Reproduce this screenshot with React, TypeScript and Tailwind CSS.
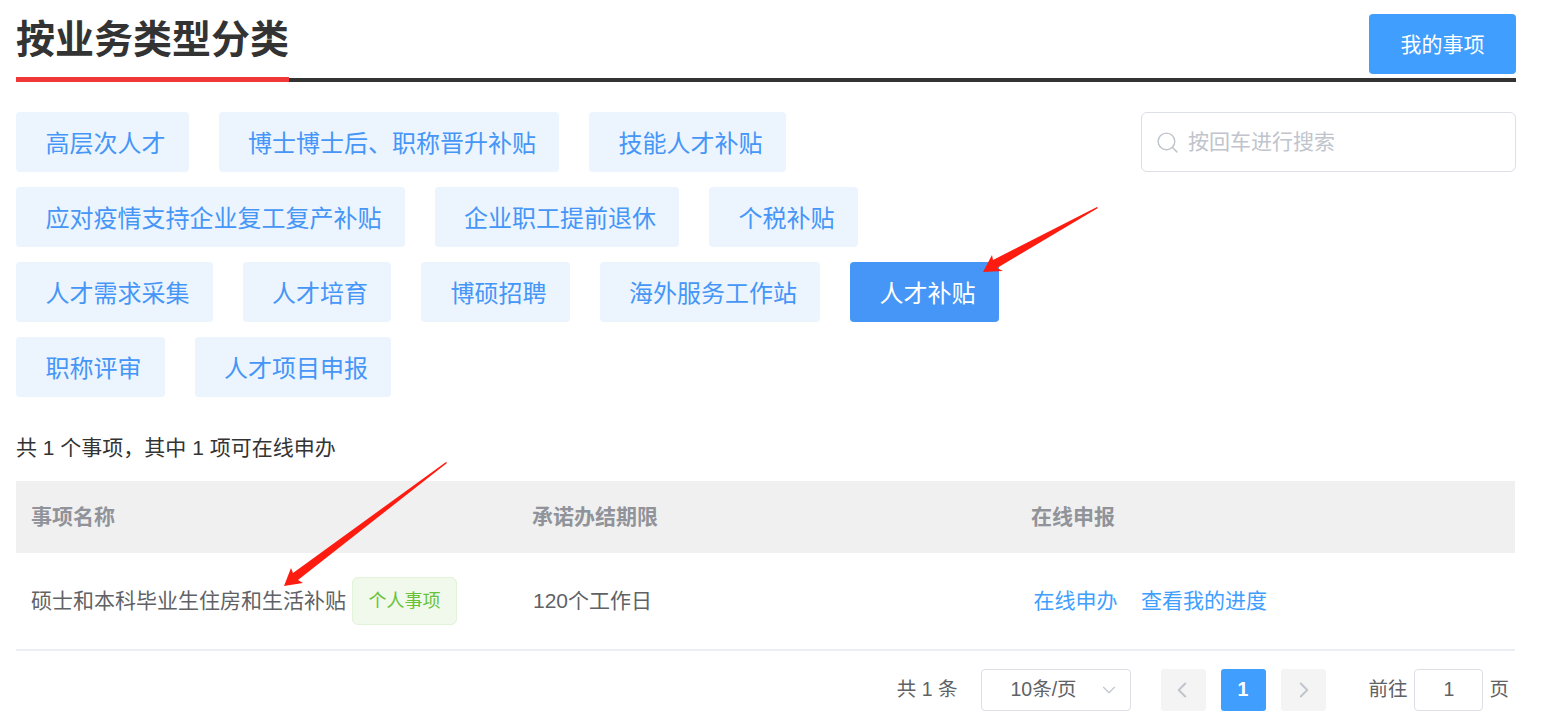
import React from 'react';
import { Search, ChevronDown, ChevronLeft, ChevronRight } from 'lucide-react';

const FONT = '"Liberation Sans", "Noto Sans CJK SC", sans-serif';

const categories = [
  '高层次人才',
  '博士博士后、职称晋升补贴',
  '技能人才补贴',
  '应对疫情支持企业复工复产补贴',
  '企业职工提前退休',
  '个税补贴',
  '人才需求采集',
  '人才培育',
  '博硕招聘',
  '海外服务工作站',
  '人才补贴',
  '职称评审',
  '人才项目申报',
];

const Arrow: React.FC<{ className: string; points: string; width: number; height: number }> = ({ className, points, width, height }) => (
  <svg className={className} width={width} height={height} viewBox={`0 0 ${width} ${height}`}>
    <polygon points={points} fill="#fe1c11" />
  </svg>
);

const App: React.FC = () => {
  return (
    <div className="relative w-[1542px] h-[727px] overflow-hidden bg-white pl-4 pr-[26px]" style={{ fontFamily: FONT }}>
      {/* title */}
      <div className="relative h-[82px] border-b-[4px] border-[#333333] flex justify-between">
        <h1 className="text-[39px] leading-[52px] mt-[14px] font-bold text-[#333333]">按业务类型分类</h1>
        <button className="w-[147px] h-[60px] mt-[14px] pt-[2px] rounded-[4px] bg-[#409eff] text-white text-[21px]">我的事项</button>
        <span className="absolute left-0 bottom-[-4px] w-[273px] h-[5px] bg-[#f03838]"></span>
      </div>

      {/* categories + search */}
      <div className="flex justify-between mt-[30px]">
        <div className="w-[1050px] flex flex-wrap gap-x-[30px] gap-y-[15px]">
          {categories.map((name) => (
            <div
              key={name}
              className={
                name === '人才补贴'
                  ? 'h-[60px] pl-[29.5px] pr-[23px] pt-[3px] flex items-center rounded-[4px] text-[24px] bg-[#4596f7] text-white'
                  : 'h-[60px] pl-[29.5px] pr-[23px] pt-[3px] flex items-center rounded-[4px] text-[24px] bg-[#ecf4fe] text-[#4596f7]'
              }
            >
              {name}
            </div>
          ))}
        </div>
        <div className="w-[375px] h-[60px] border border-[#dcdfe6] rounded-[6px] flex items-center pl-[13px] gap-[8px] text-[#c0c4cc]">
          <Search size={25} strokeWidth={1.4} />
          <span className="text-[21px]">按回车进行搜索</span>
        </div>
      </div>

      <p className="mt-[36px] text-[21px] leading-[30px] text-[#333333]">共 1 个事项，其中 1 项可在线申办</p>

      {/* table */}
      <div className="mt-[18px] w-[1499px]">
        <div className="h-[72px] bg-[#f0f0f0] grid grid-cols-[501px_499px_1fr] items-center text-[21px] font-bold text-[#909399]">
          <span className="pl-[15px]">事项名称</span>
          <span className="pl-[15px]">承诺办结期限</span>
          <span className="pl-[15px]">在线申报</span>
        </div>
        <div className="h-[98px] border-b-2 border-[#ebeef5] grid grid-cols-[501px_499px_1fr] items-center text-[21px] text-[#606266]">
          <div className="pl-[15px] flex items-center gap-[6px]">
            <span>硕士和本科毕业生住房和生活补贴</span>
            <span className="w-[105px] h-[48px] flex items-center justify-center rounded-[6px] border border-[#e1f3d8] bg-[#f0f9eb] text-[18px] text-[#67c23a]">个人事项</span>
          </div>
          <span className="pl-[16px]">120个工作日</span>
          <div className="pl-[17.5px] flex gap-[23.5px] text-[#409eff]">
            <span>在线申办</span>
            <span>查看我的进度</span>
          </div>
        </div>
      </div>

      {/* pagination */}
      <div className="mt-[18px] h-[42px] flex items-center justify-end pr-[7px] text-[19.5px] text-[#606266]">
        <span>共 1 条</span>
        <div className="ml-[24px] w-[150px] h-[42px] border border-[#dcdfe6] rounded-[4px] flex items-center justify-between pl-7 pr-[10px]">
          <span>10条/页</span>
          <ChevronDown size={22} strokeWidth={1.25} className="text-[#c0c4cc]" />
        </div>
        <button className="ml-[30px] w-[45px] h-[42px] pr-[3px] rounded-[3px] bg-[#f4f4f5] flex items-center justify-center text-[#c0c4cc]">
          <ChevronLeft size={26} strokeWidth={1.8} />
        </button>
        <div className="ml-[15px] w-[45px] h-[42px] pr-[2px] rounded-[3px] bg-[#409eff] flex items-center justify-center text-white font-bold">1</div>
        <button className="ml-[15px] w-[45px] h-[42px] rounded-[3px] bg-[#f4f4f5] flex items-center justify-center text-[#c0c4cc]">
          <ChevronRight size={26} strokeWidth={1.8} />
        </button>
        <span className="ml-[42px]">前往</span>
        <div className="ml-[7px] w-[69px] h-[42px] border border-[#dcdfe6] rounded-[4px] flex items-center justify-center">1</div>
        <span className="ml-[6px]">页</span>
      </div>

      {/* annotation arrows */}
      <Arrow
        className="absolute left-[980px] top-[205px]"
        width={120}
        height={70}
        points="117,2 118,3 17,63 23,66 3,67 12,50 13,55"
      />
      <Arrow
        className="absolute left-[282px] top-[460px]"
        width={168}
        height={128}
        points="164,2 165,3 16,120 21,123 2,126 9,108 11,113"
      />
    </div>
  );
};

export default App;
